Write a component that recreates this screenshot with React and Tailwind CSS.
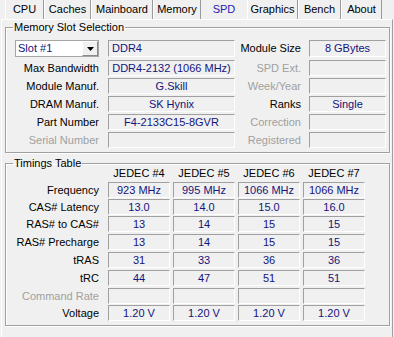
import React from "react";

const tabs = [
  { name: "CPU", w: "w-[39px]" },
  { name: "Caches", w: "w-[47px]" },
  { name: "Mainboard", w: "w-[62px]" },
  { name: "Memory", w: "w-[48px]" },
  { name: "SPD", w: "w-[46px]", active: true },
  { name: "Graphics", w: "w-[51px]" },
  { name: "Bench", w: "w-[43px]" },
  { name: "About", w: "w-[41px]" },
];

const slotRows = [
  { label: "Max Bandwidth", value: "DDR4-2132 (1066 MHz)", rlabel: "SPD Ext.", rdis: true, rvalue: "" },
  { label: "Module Manuf.", value: "G.Skill", rlabel: "Week/Year", rdis: true, rvalue: "" },
  { label: "DRAM Manuf.", value: "SK Hynix", rlabel: "Ranks", rvalue: "Single" },
  { label: "Part Number", value: "F4-2133C15-8GVR", rlabel: "Correction", rdis: true, rvalue: "" },
  { label: "Serial Number", ldis: true, value: "", rlabel: "Registered", rdis: true, rvalue: "" },
];

const timing = [
  { label: "Frequency", vals: ["923 MHz", "995 MHz", "1066 MHz", "1066 MHz"], mt: "mt-[3px]" },
  { label: "CAS# Latency", vals: ["13.0", "14.0", "15.0", "16.0"], mt: "mt-[1px]" },
  { label: "RAS# to CAS#", vals: ["13", "14", "15", "15"], mt: "mt-[1px]" },
  { label: "RAS# Precharge", vals: ["13", "14", "15", "15"], mt: "mt-[2px]" },
  { label: "tRAS", vals: ["31", "33", "36", "36"], mt: "mt-[2px]" },
  { label: "tRC", vals: ["44", "47", "51", "51"], mt: "mt-[2px]" },
  { label: "Command Rate", dis: true, vals: ["", "", "", ""], mt: "mt-[2px]" },
  { label: "Voltage", vals: ["1.20 V", "1.20 V", "1.20 V", "1.20 V"], mt: "mt-[1px]" },
];

function Field({ children, w, left }) {
  return (
    <div
      className={`${w} h-full shrink-0 flex items-center ${left ? "justify-start pl-[3px]" : "justify-center"} border-t border-l border-b border-r border-t-[#a0a0a0] border-l-[#a0a0a0] border-b-white border-r-white bg-[#f0f0f0] text-[#14147c] whitespace-nowrap`}
    >
      {children}
    </div>
  );
}

function Group({ title, children, className }) {
  return (
    <fieldset
      className={`ml-[3px] w-[385px] border border-[#a0a0a0] shadow-[inset_1px_1px_0_#ffffff,1px_1px_0_#ffffff] pl-[9px] pr-[2px] ${className}`}
    >
      <legend className="-ml-[2px] px-[1px] leading-[14px] text-black">{title}</legend>
      {children}
    </fieldset>
  );
}

export default function App() {
  return (
    <div
      className="w-[394px] h-[337px] overflow-hidden bg-[#f0f0f0] text-[11px] text-black"
      style={{ fontFamily: '"Liberation Sans", Arial, sans-serif' }}
    >
      {/* tab strip */}
      <div className="h-[19px] flex pl-[5px]">
        {tabs.map((t) => (
          <div
            key={t.name}
            className={`${t.w} h-full flex items-center justify-center ${
              t.active
                ? "text-[#2222b4]"
                : "border-l border-l-white border-r border-r-[#9a9a9a] text-black"
            }`}
          >
            {t.name}
          </div>
        ))}
      </div>

      {/* panel */}
      <div className="ml-[1px] w-[392px] h-[330px] border-t border-t-white border-l border-l-white border-r border-r-[#a0a0a0]">
        <Group title="Memory Slot Selection" className="pt-[6px] pb-[4px]">
          {/* row 1 */}
          <div className="flex h-[17px]">
            <div className="w-[84px] h-full shrink-0 bg-white border border-[#a5a5a5] flex items-center">
              <span className="pl-[2px] flex-1 text-[#14147c]">Slot #1</span>
              <div className="w-[16px] h-[15px] bg-[#f0f0f0] border-t border-l border-t-white border-l-white border-r border-b border-r-[#8a8a8a] border-b-[#8a8a8a] flex items-center justify-center">
                <svg width="7" height="4" viewBox="0 0 7 4">
                  <path d="M0 0 L7 0 L3.5 4 Z" fill="#000" />
                </svg>
              </div>
            </div>
            <div className="ml-[9px]">
              <div className="h-[17px] flex">
                <Field w="w-[127px]" left>
                  DDR4
                </Field>
              </div>
            </div>
            <div className="w-[74px] h-full shrink-0 flex items-center justify-end pr-[8px]">Module Size</div>
            <Field w="w-[77px]">8 GBytes</Field>
          </div>
          <div className="flex flex-col mt-[3px] gap-[2px]">
            {slotRows.map((r) => (
              <div key={r.label} className="flex h-[16px]">
                <div
                  className={`w-[84px] h-full shrink-0 flex items-center justify-end ${
                    r.ldis ? "text-[#a0a0a0]" : "text-black"
                  }`}
                >
                  {r.label}
                </div>
                <div className="ml-[9px] h-full flex">
                  <Field w="w-[127px]">{r.value}</Field>
                </div>
                <div
                  className={`w-[74px] h-full shrink-0 flex items-center justify-end pr-[8px] ${
                    r.rdis ? "text-[#a0a0a0]" : "text-black"
                  }`}
                >
                  {r.rlabel}
                </div>
                <Field w="w-[77px]">{r.rvalue}</Field>
              </div>
            ))}
          </div>
        </Group>

        <Group title="Timings Table" className="mt-[3px] pb-[4px]">
          <div className="flex h-[12px] -mt-[3px] items-center">
            <div className="w-[84px] shrink-0" />
            <div className="ml-[9px] flex gap-[3px]">
              {["JEDEC #4", "JEDEC #5", "JEDEC #6", "JEDEC #7"].map((h) => (
                <div key={h} className="w-[62px] text-center whitespace-nowrap">
                  {h}
                </div>
              ))}
            </div>
          </div>
          {timing.map((r) => (
            <div key={r.label} className={`flex h-[16px] ${r.mt}`}>
              <div
                className={`w-[84px] h-full shrink-0 flex items-center justify-end whitespace-nowrap ${
                  r.dis ? "text-[#a0a0a0]" : "text-black"
                }`}
              >
                {r.label}
              </div>
              <div className="ml-[9px] h-full flex gap-[3px]">
                {r.vals.map((v, i) => (
                  <Field key={i} w="w-[62px]">
                    {v}
                  </Field>
                ))}
              </div>
            </div>
          ))}
        </Group>
      </div>
    </div>
  );
}
